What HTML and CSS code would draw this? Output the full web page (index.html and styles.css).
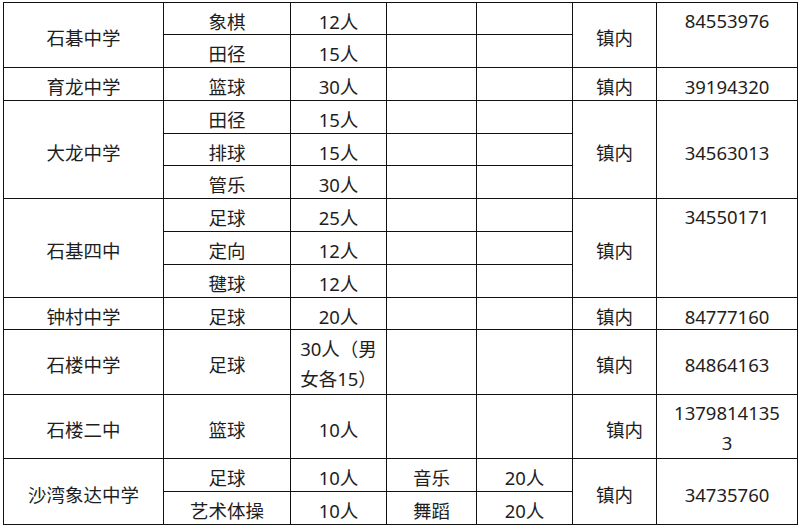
FILE: index.html
```html
<!DOCTYPE html>
<html lang="zh-CN">
<head>
<meta charset="utf-8">
<title>学校名单</title>
<link rel="stylesheet" href="styles.css">
</head>
<body>
<table class="grid">
  <colgroup>
    <col class="c1"><col class="c2"><col class="c3"><col class="c4"><col class="c5"><col class="c6"><col class="c7">
  </colgroup>
  <tbody>
    <tr class="h32">
      <td rowspan="2">石碁中学</td><td>象棋</td><td>12人</td><td></td><td></td>
      <td rowspan="2">镇内</td><td rowspan="2" class="top">84553976</td>
    </tr>
    <tr class="h33"><td>田径</td><td>15人</td><td></td><td></td></tr>
    <tr class="h33">
      <td>育龙中学</td><td>篮球</td><td>30人</td><td></td><td></td><td>镇内</td><td>39194320</td>
    </tr>
    <tr class="h33">
      <td rowspan="3">大龙中学</td><td>田径</td><td>15人</td><td></td><td></td>
      <td rowspan="3">镇内</td><td rowspan="3">34563013</td>
    </tr>
    <tr class="h32"><td>排球</td><td>15人</td><td></td><td></td></tr>
    <tr class="h33"><td>管乐</td><td>30人</td><td></td><td></td></tr>
    <tr class="h33">
      <td rowspan="3">石基四中</td><td>足球</td><td>25人</td><td></td><td></td>
      <td rowspan="3">镇内</td><td rowspan="3" class="top">34550171</td>
    </tr>
    <tr class="h33"><td>定向</td><td>12人</td><td></td><td></td></tr>
    <tr class="h33"><td>毽球</td><td>12人</td><td></td><td></td></tr>
    <tr class="h32">
      <td>钟村中学</td><td>足球</td><td>20人</td><td></td><td></td><td>镇内</td><td>84777160</td>
    </tr>
    <tr class="h65">
      <td>石楼中学</td><td>足球</td><td class="two">30人（男<br>女各15）</td><td></td><td></td><td>镇内</td><td>84864163</td>
    </tr>
    <tr class="h64">
      <td>石楼二中</td><td>篮球</td><td>10人</td><td></td><td></td><td class="shift">镇内</td><td class="two">1379814135<br>3</td>
    </tr>
    <tr class="h33">
      <td rowspan="2">沙湾象达中学</td><td>足球</td><td>10人</td><td>音乐</td><td>20人</td>
      <td rowspan="2">镇内</td><td rowspan="2">34735760</td>
    </tr>
    <tr class="h33"><td>艺术体操</td><td>10人</td><td>舞蹈</td><td>20人</td></tr>
  </tbody>
</table>
</body>
</html>
```
FILE: styles.css
```css
html, body {
  margin: 0;
  padding: 0;
  background: #ffffff;
}

body {
  padding: 2px 0 0 3px;
}

.grid {
  border-collapse: collapse;
  table-layout: fixed;
  width: 795px;
  font-family: "Noto Sans", "Noto Sans CJK SC", sans-serif;
  font-size: 18.5px;
  color: #1e1e1e;
}

.c1 { width: 160px; }
.c2 { width: 127px; }
.c3 { width: 96px; }
.c4 { width: 90px; }
.c5 { width: 96px; }
.c6 { width: 84px; }
.c7 { width: 141px; }

.grid td {
  border: 1px solid #111;
  padding: 6px 0 0 0;
  line-height: 24px;
  text-align: center;
  vertical-align: middle;
  white-space: nowrap;
  overflow: hidden;
}

.grid td.top {
  vertical-align: top;
}

.grid td.two {
  line-height: 30px;
  padding-top: 3px;
}

.grid td.shift {
  padding-left: 20px;
}

.h32 { height: 32px; }
.h33 { height: 33px; }
.h64 { height: 64px; }
.h65 { height: 65px; }
```
